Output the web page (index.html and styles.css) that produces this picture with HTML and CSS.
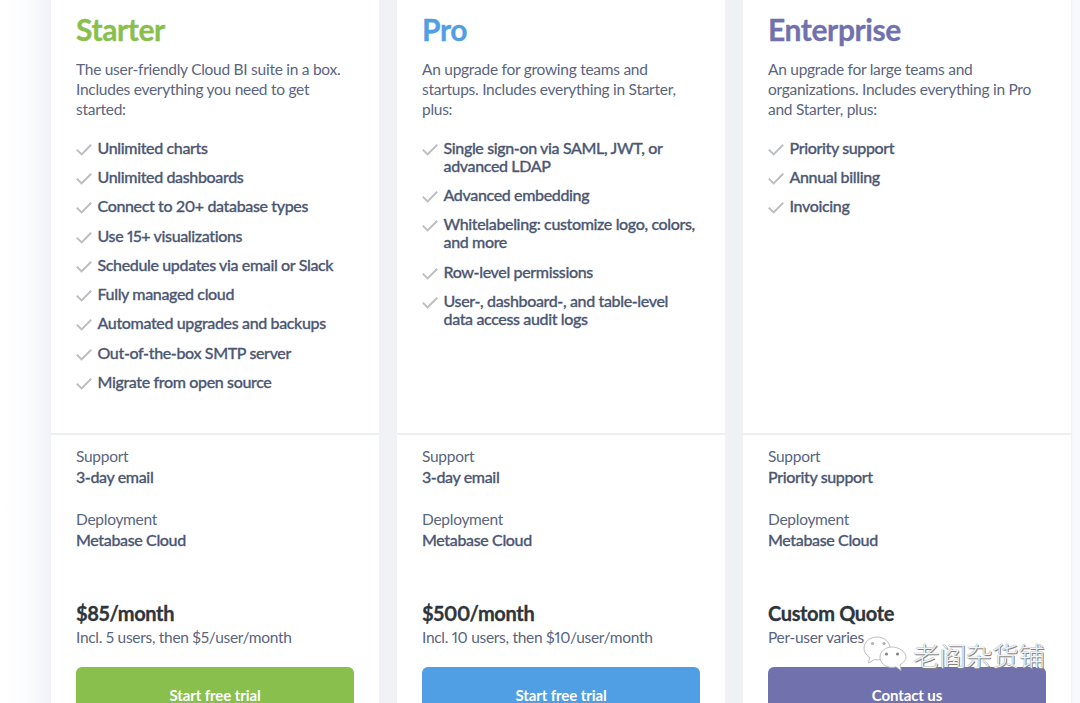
FILE: index.html
```
<!DOCTYPE html>
<html lang="en">
<head>
<meta charset="utf-8">
<title>Pricing</title>
<link rel="stylesheet" href="styles.css">
</head>
<body>
<svg class="defs" width="0" height="0" aria-hidden="true"><symbol id="check" viewBox="0 0 16 12"><path d="M.8 5.600 5.600 10.400 15.200.8" fill="none" stroke="#bcbfc2" stroke-width="2"/></symbol></svg>
<main class="plans">
  <section class="card">
    <div class="top">
      <h2 class="name green">Starter</h2>
      <p class="desc">The user-friendly Cloud BI suite in a box. Includes everything you need to get started:</p>
      <ul class="features">
        <li><svg class="tick"><use href="#check"/></svg><span>Unlimited charts</span></li>
        <li><svg class="tick"><use href="#check"/></svg><span>Unlimited dashboards</span></li>
        <li><svg class="tick"><use href="#check"/></svg><span>Connect to 20+ database types</span></li>
        <li><svg class="tick"><use href="#check"/></svg><span>Use 15+ visualizations</span></li>
        <li><svg class="tick"><use href="#check"/></svg><span>Schedule updates via email or Slack</span></li>
        <li><svg class="tick"><use href="#check"/></svg><span>Fully managed cloud</span></li>
        <li><svg class="tick"><use href="#check"/></svg><span>Automated upgrades and backups</span></li>
        <li><svg class="tick"><use href="#check"/></svg><span>Out-of-the-box SMTP server</span></li>
        <li><svg class="tick"><use href="#check"/></svg><span>Migrate from open source</span></li>
      </ul>
    </div>
    <div class="bottom">
      <p class="label">Support</p><p class="value">3-day email</p>
      <p class="label second">Deployment</p><p class="value">Metabase Cloud</p>
      <p class="price">$85/month</p>
      <p class="note">Incl. 5 users, then $5/user/month</p>
      <a class="cta bg-green">Start free trial</a>
    </div>
  </section>
  <section class="card">
    <div class="top">
      <h2 class="name blue">Pro</h2>
      <p class="desc">An upgrade for growing teams and startups. Includes everything in Starter, plus:</p>
      <ul class="features">
        <li><svg class="tick"><use href="#check"/></svg><span>Single sign-on via SAML, JWT, or advanced LDAP</span></li>
        <li><svg class="tick"><use href="#check"/></svg><span>Advanced embedding</span></li>
        <li><svg class="tick"><use href="#check"/></svg><span>Whitelabeling: customize logo, colors, and more</span></li>
        <li><svg class="tick"><use href="#check"/></svg><span>Row-level permissions</span></li>
        <li><svg class="tick"><use href="#check"/></svg><span>User-, dashboard-, and table-level data access audit logs</span></li>
      </ul>
    </div>
    <div class="bottom">
      <p class="label">Support</p><p class="value">3-day email</p>
      <p class="label second">Deployment</p><p class="value">Metabase Cloud</p>
      <p class="price">$500/month</p>
      <p class="note">Incl. 10 users, then $10/user/month</p>
      <a class="cta bg-blue">Start free trial</a>
    </div>
  </section>
  <section class="card">
    <div class="top">
      <h2 class="name purple">Enterprise</h2>
      <p class="desc">An upgrade for large teams and organizations. Includes everything in Pro and Starter, plus:</p>
      <ul class="features">
        <li><svg class="tick"><use href="#check"/></svg><span>Priority support</span></li>
        <li><svg class="tick"><use href="#check"/></svg><span>Annual billing</span></li>
        <li><svg class="tick"><use href="#check"/></svg><span>Invoicing</span></li>
      </ul>
    </div>
    <div class="bottom">
      <p class="label">Support</p><p class="value">Priority support</p>
      <p class="label second">Deployment</p><p class="value">Metabase Cloud</p>
      <p class="price">Custom Quote</p>
      <p class="note">Per-user varies</p>
      <a class="cta bg-purple">Contact us</a>
    </div>
  </section>
</main>
<div class="watermark">
  <svg class="wechat" viewBox="0 0 44 38" aria-hidden="true">
    <path d="M14 1C6.800 1 1 6 1 12.200c0 3.800 2.200 7 5.600 9L5.500 27l6-3.400c1 .2 1.800.3 2.500.3 7.200 0 13-5 13-11.700C27 6 21.200 1 14 1z" class="bubble"/>
    <path d="M29 11c-6.600 0-12 4.500-12 10.200s5.400 10.200 12 10.200c1.400 0 2.800-.2 4-.6l5 3.700-1-5.800c3.500-1.900 6-4.700 6-7.500C43 15.500 35.600 11 29 11z" class="bubble"/>
    <circle cx="9.500" cy="7.500" r="1.600" fill="#b0b0b0"/><circle cx="21" cy="7.500" r="1.600" fill="#b0b0b0"/>
    <circle cx="23.500" cy="18" r="1.600" fill="#858585"/><circle cx="34.500" cy="18" r="1.600" fill="#858585"/>
  </svg>
  <span class="wm-text">老阎杂货铺</span>
</div>
</body>
</html>
```
FILE: styles.css
```
* { box-sizing: border-box; }
html, body { margin: 0; height: 703px; overflow: hidden; }
body {
  position: relative;
  font-family: Lato, "Noto Sans", sans-serif;
  font-variant-numeric: proportional-nums;
  color: #4c5773;
  background: linear-gradient(to right, #fff 0, #fbfcfe 28px, #f1f2f6 51px, #f0f1f5 1071px, #f8f9fc 1073px);
}
.defs { position: absolute; }
.plans { display: flex; gap: 18px; padding-left: 51px; }
.card { width: 328px; flex: none; height: 703px; overflow: hidden; background: #fff; display: flex; flex-direction: column; }
.top { height: 435px; padding: 12px 25px 0; border-bottom: 2px solid #eeeff2; flex: none; }
.name { margin: 0; font-size: 30px; line-height: 34px; font-weight: 700; letter-spacing: -0.4px; -webkit-text-stroke: 0.3px currentColor; }
.green { color: #88bf4d; }
.blue { color: #509ee3; }
.purple { color: #7172ad; }
.desc { margin: 13px 0 0; font-size: 15.500px; line-height: 20px; letter-spacing: -0.27px; color: #5a6580; }
.features { list-style: none; margin: 19.750px 0 0; padding: 0; }
.features li { display: flex; font-size: 16px; line-height: 18px; font-weight: 500; letter-spacing: -0.36px; margin-bottom: 11.250px; -webkit-text-stroke: 0.3px #4c5773; }
.tick { flex: none; width: 16px; height: 12px; margin: 5px 5.500px 0 0; }
.bottom { padding: 11px 25px 0; }
.bottom p { margin: 0; }
.label { font-size: 15.500px; line-height: 20px; letter-spacing: -0.27px; color: #5a6580; }
.value { font-size: 16px; line-height: 21px; font-weight: 500; letter-spacing: -0.36px; -webkit-text-stroke: 0.3px #4c5773; }
.second { margin-top: 22px !important; }
.price { margin-top: 50px !important; font-size: 20px; line-height: 26px; font-weight: 700; letter-spacing: -0.35px; color: #2e353b; -webkit-text-stroke: 0.3px #2e353b; }
.note { font-size: 15.500px; line-height: 21px; letter-spacing: -0.3px; color: #5a6580; margin-top: 1px !important; }
.cta { display: block; width: 278px; height: 56px; margin-top: 19px; border-radius: 6px; color: #fff; text-align: center; font-size: 15px; font-weight: 700; letter-spacing: -0.1px; line-height: 56px; }
.bg-green { background: #88bf4d; }
.bg-blue { background: #509ee3; }
.bg-purple { background: #7172ad; }
.watermark { position: absolute; left: 863px; top: 636px; display: flex; align-items: center; gap: 6px; }
.wechat { width: 44px; height: 38px; }
.bubble { fill: #fff; stroke: #b8b8b8; stroke-width: 0.9; }
.wm-text { font-family: "Noto Sans CJK SC", sans-serif; font-size: 26.400px; line-height: 38px; font-weight: 300; color: #f4f4f4; text-shadow: 0 0 1px #666, 1px 1px 0 #888; }
```
